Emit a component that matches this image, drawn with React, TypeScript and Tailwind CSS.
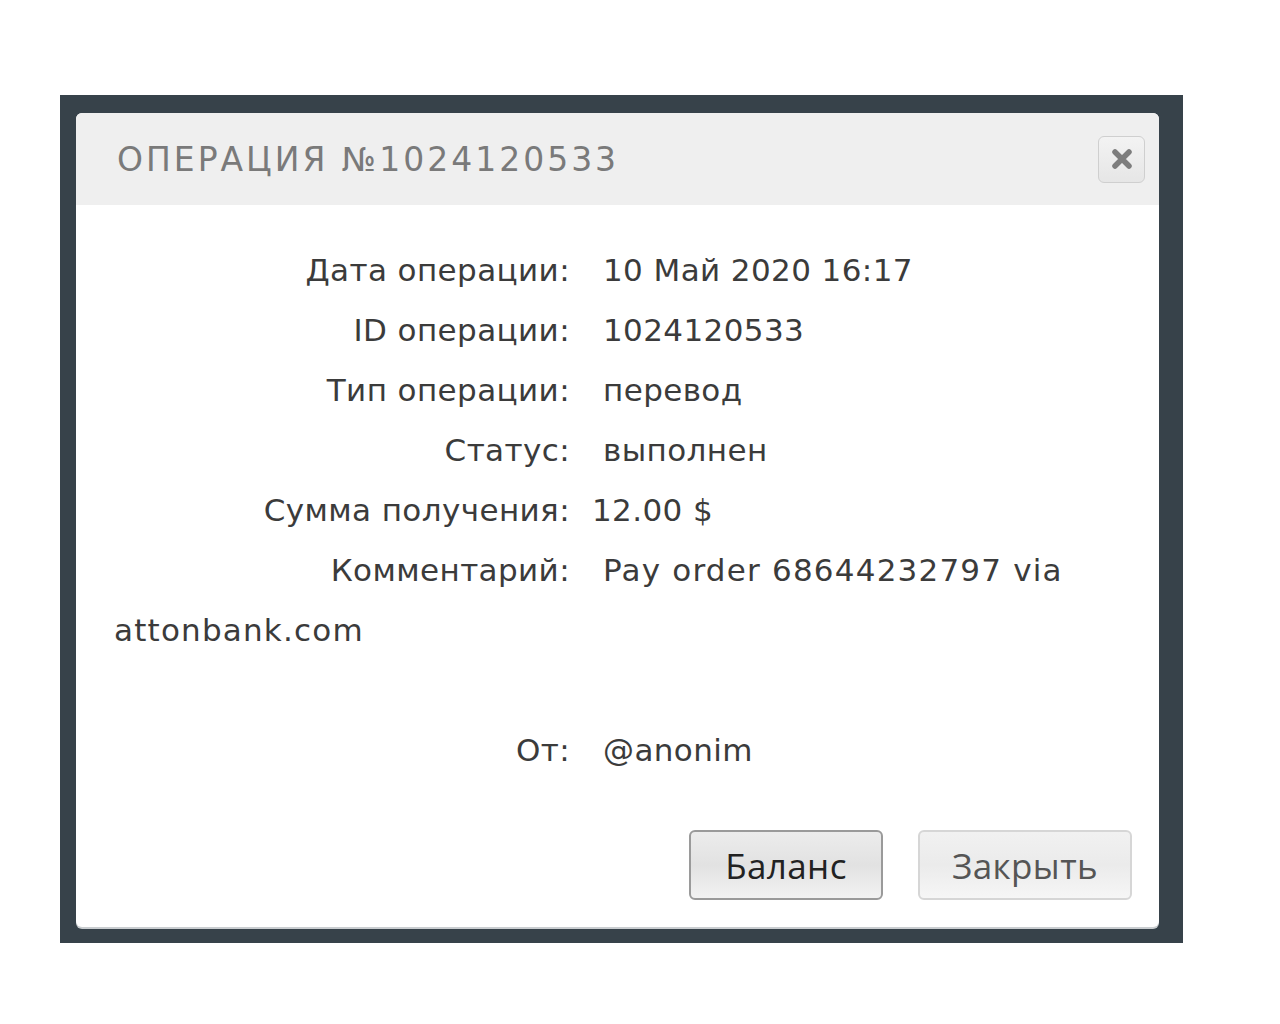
const rows: { label: string; value: string; gap: string }[] = [
  { label: "Дата операции:", value: "10 Май 2020 16:17", gap: "ml-[33px]" },
  { label: "ID операции:", value: "1024120533", gap: "ml-[33px]" },
  { label: "Тип операции:", value: "перевод", gap: "ml-[33px]" },
  { label: "Статус:", value: "выполнен", gap: "ml-[33px]" },
  { label: "Сумма получения:", value: "12.00 $", gap: "ml-[22px]" },
];

export default function App() {
  return (
    <div className="min-h-screen bg-white pt-[95px] pl-[60px]">
      {/* dimmed page behind the dialog */}
      <div className="w-[1123px] h-[848px] bg-[#37424a] pt-[18px] pl-[16px]">
        <div className="w-[1083px] h-[814px] bg-white rounded-[6px] overflow-hidden flex flex-col shadow-[0_2px_0_#c9cdd0]">
          {/* header */}
          <div className="h-[92px] shrink-0 bg-[#efefef] flex items-center justify-between pl-[41px] pr-[14px]">
            <h1 className="text-[33px] tracking-[3px] text-[#7a7a7a] font-['DejaVu_Sans',sans-serif] font-normal leading-none">
              ОПЕРАЦИЯ №1024120533
            </h1>
            <button className="w-[47px] h-[47px] rounded-[6px] border border-[#cfcfcf] bg-gradient-to-b from-[#f3f3f3] to-[#e6e6e6] flex items-center justify-center">
              <svg width="24" height="24" viewBox="0 0 24 24">
                <path d="M5 5 L19 19 M19 5 L5 19" stroke="#7d7d7d" strokeWidth="5.5" strokeLinecap="round" />
              </svg>
            </button>
          </div>

          {/* body */}
          <div className="flex-1 flex flex-col pt-[35px] pl-[38px] pr-[27px] pb-[27px] font-['DejaVu_Sans',sans-serif] text-[31px] tracking-[0.4px] leading-[60px] text-[#3b3b3b]">
            {rows.map((r) => (
              <p key={r.label}>
                <span className="inline-block w-[456px] text-right">{r.label}</span>
                <span className={r.gap}>{r.value}</span>
              </p>
            ))}
            <p>
              <span className="inline-block w-[456px] text-right">Комментарий:</span>
              <span className="ml-[33px] tracking-[1.2px]">Pay order 68644232797 via attonbank.com</span>
            </p>
            <p>&nbsp;</p>
            <p>
              <span className="inline-block w-[456px] text-right">От:</span>
              <span className="ml-[33px]">@anonim</span>
            </p>

            <div className="mt-auto flex justify-end gap-[35px] font-['Open_Sans',sans-serif] text-[35px] leading-none">
              <button className="w-[194px] h-[70px] rounded-[6px] border-2 border-[#9a9a9a] bg-gradient-to-b from-[#ececec] via-[#e2e2e2] to-[#f2f2f2] text-[#222]">
                Баланс
              </button>
              <button className="w-[214px] h-[70px] rounded-[6px] border-2 border-[#d6d6d6] bg-gradient-to-b from-[#f1f1f1] via-[#ebebeb] to-[#f6f6f6] text-[#555]">
                Закрыть
              </button>
            </div>
          </div>
        </div>
      </div>
    </div>
  );
}
